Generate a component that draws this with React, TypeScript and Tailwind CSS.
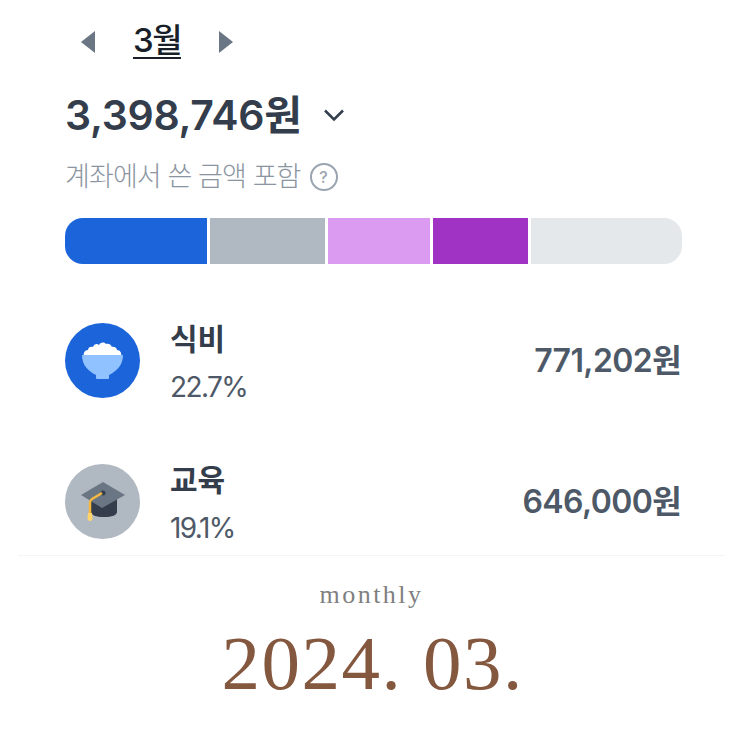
import React from 'react';

const segments = [
  { id: 'food', className: 'w-[142px] bg-[#1b64da] rounded-l-[18px]' },
  { id: 'edu', className: 'w-[115px] bg-[#b0b8c1]' },
  { id: 'shop', className: 'w-[102px] bg-[#da9bf0]' },
  { id: 'fun', className: 'w-[95px] bg-[#a033c4]' },
  { id: 'etc', className: 'flex-1 bg-[#e5e8eb] rounded-r-[18px]' },
];

const RiceIcon = () => (
  <svg width="41" height="37" viewBox="0 0 41 37">
    <path
      d="M2 14c-1-3 1-6 4-6 0-3 3-4 5-3 1-3 4-4 6-2 2-3 5-3 7-1 2-1 5 0 6 3 2-1 5 1 5 3 3 0 5 3 4 6z"
      fill="#ffffff"
    />
    <path d="M0 13h41c0 10-6 16-14 20v3c0 .5-.5 1-1 1H15c-.5 0-1-.5-1-1v-3C6 29 0 23 0 13z" fill="#90c2ff" />
  </svg>
);

const CapIcon = () => (
  <svg width="44" height="39" viewBox="0 0 44 39">
    <path d="M10 17v13c0 3 5 5 13 5s13-2 13-5V17z" fill="#333d4b" />
    <path d="M22 0 44 13 21 26 0 13z" fill="#6b7684" />
    <circle cx="22" cy="11" r="2.500" fill="#333d4b" />
    <path d="M21 11 11 17c-1.500 1-2 2-2 3.500V32" fill="none" stroke="#f5b942" strokeWidth="2.500" />
    <path d="M7 31h4l.5 5c0 2-1 3-2.500 3s-2.500-1-2.500-3z" fill="#ffd56b" />
  </svg>
);

type RowProps = {
  icon: React.ReactNode;
  iconBg: string;
  name: string;
  percent: string;
  amount: string;
};

const Row = ({ icon, iconBg, name, percent, amount }: RowProps) => (
  <div className="flex h-[75px] items-center">
    <div className={`flex h-[75px] w-[75px] shrink-0 items-center justify-center rounded-full ${iconBg}`}>
      {icon}
    </div>
    <div className="ml-[30px] flex flex-1 flex-col gap-[15px] pt-[3px]">
      <span className="text-[30px] leading-[34px] font-semibold text-[#333d4b]">{name}</span>
      <span className="text-[28px] leading-[32px] tracking-[-1.6px] text-[#4e5968]">{percent}</span>
    </div>
    <span className="mr-[1px] text-[32px] leading-[36px] font-semibold tracking-[-0.6px] text-[#4e5968]">{amount}</span>
  </div>
);

export default function App() {
  return (
    <div className="h-[743px] w-[743px] overflow-hidden bg-white font-['Inter','Noto_Sans_CJK_KR',sans-serif]">
      <div className="pr-[61px] pl-[65px]">
        <div className="mt-[23px] flex h-[36px] items-center pt-[1px]">
          <svg width="14" height="22" viewBox="0 0 14 22" className="ml-[16px]">
            <path d="M14 0v22L0 11z" fill="#6b7684" />
          </svg>
          <span className="ml-[38px] border-b-2 border-[#191f28] text-[33px] leading-[33px] font-medium tracking-[-1.5px] text-[#191f28]">
            3월
          </span>
          <svg width="14" height="22" viewBox="0 0 14 22" className="ml-[38px]">
            <path d="M0 0v22l14-11z" fill="#6b7684" />
          </svg>
        </div>

        <div className="mt-[32px] flex h-[48px] items-center">
          <span className="text-[41px] leading-[48px] font-semibold tracking-[-0.3px] text-[#333d4b]">3,398,746원</span>
          <svg width="22" height="14" viewBox="0 0 22 14" className="ml-[21px]">
            <path d="M2 2.500 11 11.500 20 2.500" fill="none" stroke="#333d4b" strokeWidth="2.500" />
          </svg>
        </div>

        <div className="mt-[23px] flex h-[30px] items-center">
          <span className="text-[27px] leading-[30px] font-light tracking-[-0.9px] text-[#8b95a1]">계좌에서 쓴 금액 포함</span>
          <span className="ml-[9px] flex h-[28px] w-[28px] items-center justify-center rounded-full border-2 border-[#9aa4b0] text-[16px] font-medium text-[#9aa4b0]">
            ?
          </span>
        </div>

        <div className="mt-[26px] flex h-[46px] gap-[3px]">
          {segments.map((s) => (
            <div key={s.id} className={s.className} />
          ))}
        </div>

        <div className="mt-[59px] flex flex-col gap-[66px]">
          <Row icon={<RiceIcon />} iconBg="bg-[#1b64da]" name="식비" percent="22.7%" amount="771,202원" />
          <Row icon={<CapIcon />} iconBg="bg-[#b0b8c1]" name="교육" percent="19.1%" amount="646,000원" />
        </div>
      </div>

      <div className="mx-[18px] mt-[16px] h-[1px] bg-[#f7f4f1]" />

      <div className="flex flex-col items-center font-['Liberation_Serif',serif]">
        <span className="mt-[24px] text-[26px] leading-[30px] tracking-[2.5px] text-[#7f7f7f]">monthly</span>
        <span className="mt-[8px] ml-[2px] text-[77px] leading-[90px] tracking-[1.5px] text-[#84573f]">2024. 03.</span>
      </div>
    </div>
  );
}
